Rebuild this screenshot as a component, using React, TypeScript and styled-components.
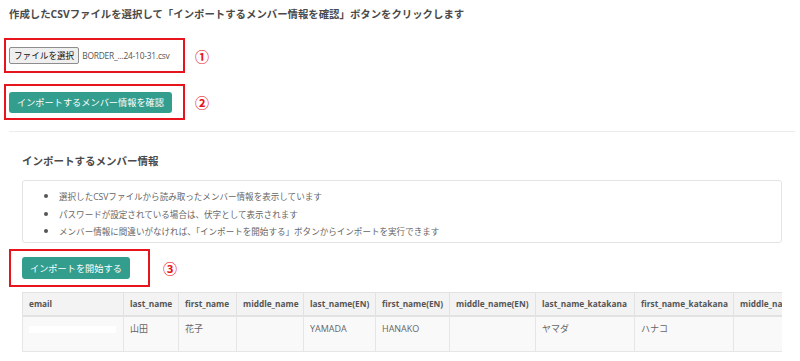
import React from 'react';
import styled, {createGlobalStyle} from 'styled-components';

const GlobalStyle = createGlobalStyle`
	body {
		margin: 0;
		background: #ffffff;
		font-family: 'Open Sans', 'Noto Sans CJK JP', sans-serif;
		color: #555;
	}
`;

const Page = styled.div`
	width: 800px;
	height: 361px;
	overflow: hidden;
	padding-top: 6px;
	box-sizing: border-box;
`;

const Title = styled.div`
	padding-left: 9px;
	font-size: 10.4px;
	line-height: 16px;
	font-weight: 700;
	color: #4a4a4a;
	white-space: nowrap;
`;

const StepRow = styled.div<{$top: number; $left: number; $gap: number}>`
	display: flex;
	align-items: center;
	gap: ${(p) => p.$gap}px;
	margin-top: ${(p) => p.$top}px;
	margin-left: ${(p) => p.$left}px;
`;

const Marker = styled.div<{$w: number; $h: number; $pad: number}>`
	box-sizing: border-box;
	width: ${(p) => p.$w}px;
	height: ${(p) => p.$h}px;
	padding-left: ${(p) => p.$pad}px;
	border: 2px solid #e8141d;
	display: flex;
	align-items: center;
`;

const StepNo = styled.span`
	color: #e8141d;
	font-family: 'Noto Sans CJK JP', sans-serif;
	font-size: 14px;
	font-weight: 700;
	line-height: 14px;
`;

const FileButton = styled.button`
	height: 17px;
	padding: 0 4px;
	border: 1px solid #8d8d8d;
	border-radius: 2px;
	background: #efefef;
	font-family: 'Open Sans', 'Noto Sans CJK JP', sans-serif;
	font-size: 8.6px;
	color: #111;
	display: flex;
	align-items: center;
`;

const FileName = styled.span`
	margin-left: 3px;
	font-size: 8.4px;
	color: #555;
	letter-spacing: -0.2px;
`;

const TealButton = styled.button<{$h: number}>`
	height: ${(p) => p.$h}px;
	padding: 0 8px;
	border: none;
	border-radius: 3px;
	background: #339e8e;
	color: #ffffff;
	font-family: 'Open Sans', 'Noto Sans CJK JP', sans-serif;
	font-size: 9.2px;
	white-space: nowrap;
`;

const Divider = styled.hr`
	margin: 11px 5px 0 9px;
	border: none;
	border-top: 1px solid #ececec;
`;

const Section = styled.div`
	padding: 0 18px 0 22px;
`;

const Heading = styled.h3`
	margin: 21px 0 0;
	font-size: 10.5px;
	line-height: 16px;
	font-weight: 700;
	color: #4a4a4a;
`;

const InfoBox = styled.div`
	margin-top: 11px;
	height: 63px;
	box-sizing: border-box;
	border: 1px solid #e4e4e4;
	border-radius: 3px;
	padding-top: 7px;
`;

const Notes = styled.ul`
	margin: 0;
	padding-left: 36px;
	font-size: 8.55px;
	line-height: 15.7px;
	color: #666;

	li::marker {
		font-size: 11px;
		color: #555;
	}
`;

const TableWrap = styled.div`
	margin-top: 5px;
	width: 760px;
	overflow: hidden;
`;

const Table = styled.table<{$w: number}>`
	border-collapse: collapse;
	table-layout: fixed;
	width: ${(p) => p.$w}px;
	font-size: 9px;
`;

const HeadCell = styled.th<{$w: number}>`
	width: ${(p) => p.$w}px;
	height: 23px;
	box-sizing: border-box;
	padding: 0 5px 0 6px;
	background: #f3f3f3;
	border: 1px solid #e2e2e2;
	border-bottom-width: 2px;
	text-align: left;
	font-size: 8.3px;
	font-weight: 700;
	color: #555;
	white-space: nowrap;
	overflow: hidden;
`;

const Cell = styled.td`
	height: 36px;
	box-sizing: border-box;
	padding: 5px 6px 0;
	vertical-align: top;
	background: #f9f9f9;
	border: 1px solid #e6e6e6;
	color: #666;
	line-height: 14px;
	white-space: nowrap;
`;

const Redacted = styled.span`
	display: block;
	width: 87px;
	height: 7px;
	margin-top: 4px;
	background: #ffffff;
`;

const COLUMNS: [string, number][] = [
	['email', 101],
	['last_name', 55],
	['first_name', 58],
	['middle_name', 67],
	['last_name(EN)', 72],
	['first_name(EN)', 74],
	['middle_name(EN)', 86],
	['last_name_katakana', 99],
	['first_name_katakana', 99],
	['middle_name_katakana', 49],
];

const TABLE_WIDTH = COLUMNS.reduce((sum, [, w]) => sum + w, 0);

const ROW = ['', '山田', '花子', '', 'YAMADA', 'HANAKO', '', 'ヤマダ', 'ハナコ', ''];

const App: React.FunctionComponent = (): React.ReactElement => {
	return (
		<Page>
			<GlobalStyle />
			<Title>
				作成したCSVファイルを選択して「インポートするメンバー情報を確認」ボタンをクリックします
			</Title>
			<StepRow $top={16} $left={4} $gap={10}>
				<Marker $w={181} $h={35} $pad={3}>
					<FileButton>ファイルを選択</FileButton>
					<FileName>BORDER_...24-10-31.csv</FileName>
				</Marker>
				<StepNo>①</StepNo>
			</StepRow>
			<StepRow $top={11} $left={4} $gap={10}>
				<Marker $w={181} $h={36} $pad={3}>
					<TealButton $h={21}>インポートするメンバー情報を確認</TealButton>
				</Marker>
				<StepNo>②</StepNo>
			</StepRow>
			<Divider />
			<Section>
				<Heading>インポートするメンバー情報</Heading>
				<InfoBox>
					<Notes>
						<li>選択したCSVファイルから読み取ったメンバー情報を表示しています</li>
						<li>パスワードが設定されている場合は、伏字として表示されます</li>
						<li>
							メンバー情報に間違いがなければ、「インポートを開始する」ボタンからインポートを実行できます
						</li>
					</Notes>
				</InfoBox>
				<StepRow $top={6} $left={-13} $gap={13}>
					<Marker $w={141} $h={38} $pad={11}>
						<TealButton $h={22}>インポートを開始する</TealButton>
					</Marker>
					<StepNo>③</StepNo>
				</StepRow>
				<TableWrap>
					<Table $w={TABLE_WIDTH}>
						<thead>
							<tr>
								{COLUMNS.map(([name, w]) => (
									<HeadCell key={name} $w={w}>
										{name}
									</HeadCell>
								))}
							</tr>
						</thead>
						<tbody>
							<tr>
								{ROW.map((v, i) => (
									<Cell key={i}>{i === 0 ? <Redacted /> : v}</Cell>
								))}
							</tr>
						</tbody>
					</Table>
				</TableWrap>
			</Section>
		</Page>
	);
};

export default App;
